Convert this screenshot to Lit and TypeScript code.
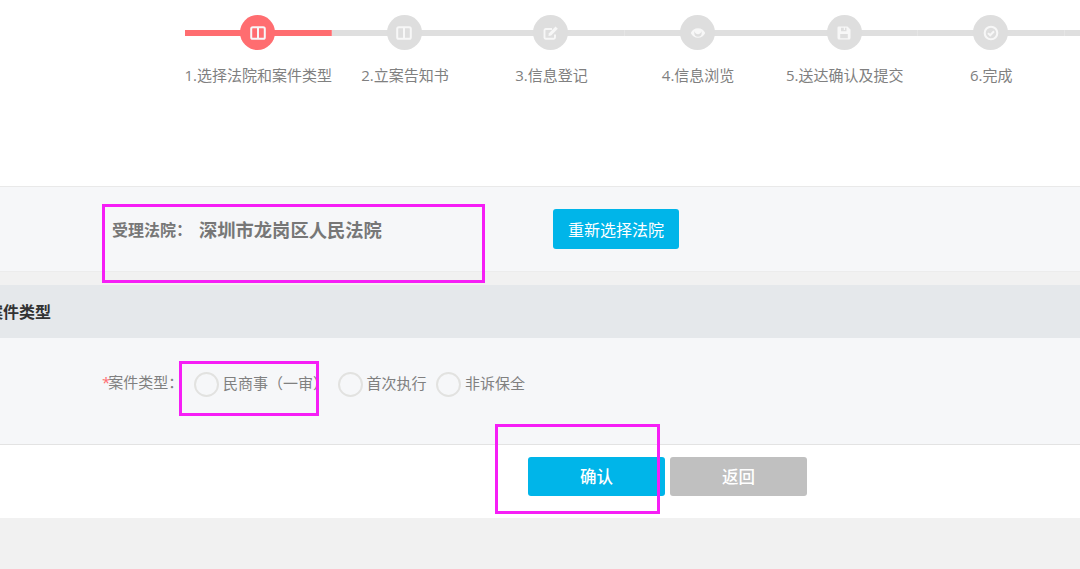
import { LitElement, html, css, svg } from "lit";
import { customElement } from "lit/decorators.js";

const columns = svg`<rect x="1.200" y="2.200" width="13.600" height="11.600" rx="1.600" fill="none" stroke="currentColor" stroke-width="2"/><path d="M8 3v10" stroke="currentColor" stroke-width="2"/>`;
const edit = svg`<path d="M12 9.500V12.500a1.200 1.200 0 0 1-1.200 1.200H2.700a1.200 1.200 0 0 1-1.200-1.200V5.200A1.200 1.200 0 0 1 2.700 4H9" fill="none" stroke="currentColor" stroke-width="1.900"/><path d="M6 8.200 12.600 1.600l2.200 2.200L8.200 10.400l-2.800.6z" fill="currentColor"/>`;
const eye = svg`<path fill-rule="evenodd" d="M8 3.200c3.200 0 5.900 2 7.200 4.800C13.900 10.800 11.200 12.800 8 12.800S2.100 10.800.8 8C2.100 5.200 4.800 3.200 8 3.200zM4.500 6.300A2.600 2.600 0 0 0 4.300 8a3.700 3.700 0 0 0 7.400 0c0-.6-.1-1.200-.3-1.700-.2 1.600-1.600 2.900-3.400 2.900S4.700 7.900 4.500 6.300z" fill="currentColor"/>`;
const save = svg`<path fill-rule="evenodd" d="M2.500 1.500H11.500L14.500 4.500V13a1.500 1.500 0 0 1-1.500 1.500H3A1.500 1.500 0 0 1 1.500 13V2.500a1 1 0 0 1 1-1zM5 2.800V6.300h5.500V2.800H9v2.200H7.800V2.800zM4.200 9v4.200h7.600V9z" fill="currentColor"/>`;
const check = svg`<circle cx="8" cy="8" r="6.300" fill="none" stroke="currentColor" stroke-width="2.100"/><path d="M5 8.100 7.200 10.300 11 6.200" fill="none" stroke="currentColor" stroke-width="2"/>`;

const STEPS = [
  { label: "1.选择法院和案件类型", icon: columns, active: true },
  { label: "2.立案告知书", icon: columns, active: false },
  { label: "3.信息登记", icon: edit, active: false },
  { label: "4.信息浏览", icon: eye, active: false },
  { label: "5.送达确认及提交", icon: save, active: false },
  { label: "6.完成", icon: check, active: false },
];

const RADIOS = ["民商事（一审）", "首次执行", "非诉保全"];

@customElement("app-root")
export class AppRoot extends LitElement {
  static styles = css`
    :host {
      display: block;
      position: relative;
      height: 569px;
      overflow: hidden;
      background: #f1f1f1;
      font-family: "Open Sans", "Noto Sans CJK SC", sans-serif;
      color: #777;
    }
    .top {
      height: 186px;
      background: #fff;
      padding: 15px 0 0 185px;
      box-sizing: border-box;
      display: flex;
      align-items: flex-start;
    }
    .step {
      flex: none;
      width: 146.600px;
      display: flex;
      flex-direction: column;
      align-items: center;
    }
    .node {
      align-self: stretch;
      height: 35px;
      display: flex;
      align-items: center;
      justify-content: center;
      background: linear-gradient(#dfdfdf, #dfdfdf) center / 100% 6px no-repeat;
    }
    .active .node {
      background-image: linear-gradient(#ff6d70, #ff6d70);
    }
    .circle {
      width: 35px;
      height: 35px;
      margin-left: -1px;
      border-radius: 50%;
      background: #dedede;
      color: #f7f7f7;
      display: flex;
      align-items: center;
      justify-content: center;
    }
    .active .circle {
      background: #ff6d70;
    }
    .circle svg {
      width: 16px;
      height: 16px;
    }
    .label {
      margin-top: 15px;
      font-size: 15px;
      line-height: 20px;
      color: #808080;
      white-space: nowrap;
    }
    .tail {
      flex: 1;
      height: 6px;
      margin-top: 15px;
      background: #dfdfdf;
    }
    .court {
      height: 86px;
      box-sizing: border-box;
      background: #f6f7f9;
      border-top: 1px solid #e9e9e9;
      border-bottom: 1px solid #ececec;
      display: flex;
      align-items: flex-start;
      padding: 22px 0 0 112px;
    }
    .court-label {
      font-size: 16px;
      font-weight: 700;
      line-height: 44px;
      width: 87px;
      margin-top: -1px;
      white-space: nowrap;
    }
    .court-name {
      font-size: 18.300px;
      font-weight: 700;
      line-height: 44px;
      width: 354px;
      margin-top: -1px;
      white-space: nowrap;
    }
    .btn {
      border: 0;
      font-family: inherit;
      color: #fff;
      border-radius: 3px;
      padding: 0 0 1px;
      font-size: 16px;
    }
    .reselect {
      width: 126px;
      height: 40px;
      background: #00b5e9;
    }
    .head {
      margin-top: 13px;
      height: 53px;
      background: #e5e8eb;
      display: flex;
      align-items: center;
      font-size: 16px;
      font-weight: 700;
      color: #333;
      white-space: nowrap;
    }
    .head span {
      margin-left: -13px;
      margin-top: -1px;
    }
    .form {
      height: 107px;
      box-sizing: border-box;
      background: #f6f7f9;
      border-bottom: 1px solid #e3e3e3;
      display: flex;
      align-items: flex-start;
      padding: 34px 0 0 102px;
      font-size: 15px;
      line-height: 20px;
      color: #808080;
    }
    .form-label {
      width: 92px;
      white-space: nowrap;
    }
    .form-label i {
      font-style: normal;
      color: #ff6d70;
      margin-right: -2px;
    }
    .radios {
      display: flex;
    }
    .radio {
      display: flex;
      align-items: center;
      margin-right: 9.500px;
      white-space: nowrap;
    }
    .radio span:last-child {
      margin-top: -3px;
    }
    .dot {
      width: 25px;
      height: 25px;
      box-sizing: border-box;
      border: 2px solid #e2e2e0;
      border-radius: 50%;
      margin-right: 4px;
    }
    .footer {
      height: 73px;
      box-sizing: border-box;
      background: #fff;
      display: flex;
      gap: 5px;
      padding: 12px 0 0 528px;
    }
    .action {
      width: 137px;
      height: 39px;
      padding-bottom: 2px;
      font-weight: 500;
      font-size: 16.500px;
    }
    .ok {
      background: #00b5e9;
    }
    .back {
      background: #c0c0c0;
    }
    .mark {
      position: absolute;
      box-sizing: border-box;
      border: 3px solid #f61ef6;
      pointer-events: none;
    }
    .mark.a {
      left: 102px;
      top: 204px;
      width: 383px;
      height: 79px;
    }
    .mark.b {
      left: 179px;
      top: 361px;
      width: 140px;
      height: 55px;
    }
    .mark.c {
      left: 495px;
      top: 424px;
      width: 165px;
      height: 90px;
    }
  `;

  render() {
    return html`
      <div class="top">
        ${STEPS.map(
          (s) => html`<div class="step ${s.active ? "active" : ""}">
            <div class="node">
              <div class="circle">
                <svg viewBox="0 0 16 16">${s.icon}</svg>
              </div>
            </div>
            <div class="label">${s.label}</div>
          </div>`
        )}
        <div class="tail"></div>
      </div>
      <div class="court">
        <div class="court-label">受理法院：</div>
        <div class="court-name">深圳市龙岗区人民法院</div>
        <button class="btn reselect">重新选择法院</button>
      </div>
      <div class="head"><span>案件类型</span></div>
      <div class="form">
        <div class="form-label"><i>*</i>案件类型：</div>
        <div class="radios">
          ${RADIOS.map(
            (r) => html`<div class="radio"><span class="dot"></span><span>${r}</span></div>`
          )}
        </div>
      </div>
      <div class="footer">
        <button class="btn action ok">确认</button>
        <button class="btn action back">返回</button>
      </div>
      <div class="mark a"></div>
      <div class="mark b"></div>
      <div class="mark c"></div>
    `;
  }
}
